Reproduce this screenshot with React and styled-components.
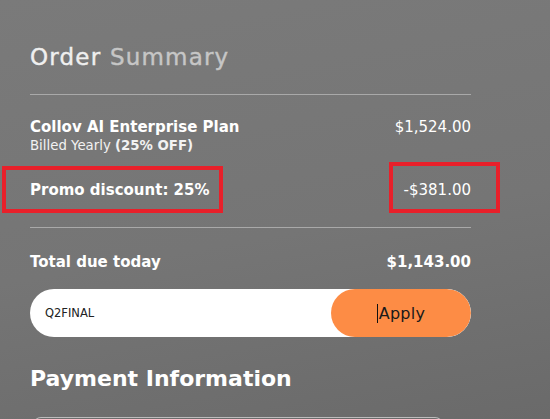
import styled, { createGlobalStyle } from 'styled-components';

const GlobalStyle = createGlobalStyle`
  html, body {
    margin: 0;
    padding: 0;
  }
  body {
    font-family: "DejaVu Sans", "Liberation Sans", sans-serif;
    color: #fff;
  }
`;

const Page = styled.div`
  height: 419px;
  box-sizing: border-box;
  padding: 42px 79px 0 30px;
  background: linear-gradient(170deg, #7a7a7a 0%, #757575 55%, #6a6a6a 100%);
  overflow: hidden;
`;

const Title = styled.h2`
  margin: 0;
  font-size: 23px;
  font-weight: 400;
  line-height: 30px;
  color: #efefef;
  letter-spacing: 1.2px;
  -webkit-text-stroke: 0.4px currentColor;
`;

const Muted = styled.span`
  color: #c6c6c6;
`;

const Divider = styled.hr`
  margin: ${p => p.top}px 0 0;
  border: none;
  height: 1px;
  background: #a9a9a9;
`;

const Row = styled.div`
  position: relative;
  display: flex;
  justify-content: space-between;
  align-items: flex-start;
  margin-top: ${p => p.top}px;
`;

const Label = styled.div`
  font-size: 15px;
  font-weight: 700;
  line-height: 20px;
`;

const Sub = styled.div`
  font-size: 13.3px;
  line-height: 18px;
  color: #f2f2f2;

  b {
    font-weight: 700;
  }
`;

const Amount = styled.div`
  font-size: 15px;
  font-weight: ${p => (p.bold ? 700 : 400)};
  line-height: 20px;
`;

const Marker = styled.div`
  position: absolute;
  border: 4px solid #e8202a;
  box-sizing: border-box;
`;

const PromoForm = styled.div`
  display: flex;
  align-items: center;
  height: 48px;
  margin-top: 17px;
  background: #fff;
  border-radius: 24px;
  overflow: hidden;
`;

const PromoInput = styled.div`
  flex: 1;
  padding-left: 15px;
  font-size: 11.5px;
  color: #222;
`;

const ApplyButton = styled.div`
  width: 140px;
  height: 48px;
  display: flex;
  align-items: center;
  justify-content: center;
  background: #fd8c45;
  border-radius: 24px;
  font-size: 16px;
  font-weight: 400;
  color: #1a1a1a;
  letter-spacing: 0.3px;
`;

const Caret = styled.span`
  display: inline-block;
  width: 1px;
  height: 19px;
  background: #111;
  margin-right: 1px;
`;

const Heading = styled.h2`
  margin: 27px 0 0;
  font-size: 22px;
  font-weight: 700;
  line-height: 30px;
  color: #fff;
`;

const NextField = styled.div`
  height: 20px;
  margin: 23px 28px 0 3px;
  border: 1px solid #bdbdbd;
  border-bottom: none;
  border-radius: 8px 8px 0 0;
`;

export default function App() {
  return (
    <>
      <GlobalStyle />
      <Page>
        <Title>
          Order <Muted>Summary</Muted>
        </Title>
        <Divider top={22} />

        <Row top={22}>
          <div>
            <Label>Collov AI Enterprise Plan</Label>
            <Sub>
              Billed Yearly <b>(25% OFF)</b>
            </Sub>
          </div>
          <Amount>$1,524.00</Amount>
        </Row>

        <Row top={25}>
          <Label>Promo discount: 25%</Label>
          <Amount>-$381.00</Amount>
          <Marker style={{ left: -28, top: -14, width: 221, height: 47 }} />
          <Marker style={{ left: 359, top: -18, width: 111, height: 51 }} />
        </Row>

        <Divider top={27} />

        <Row top={24}>
          <Label>Total due today</Label>
          <Amount bold>$1,143.00</Amount>
        </Row>

        <PromoForm>
          <PromoInput>Q2FINAL</PromoInput>
          <ApplyButton>
            <Caret />
            Apply
          </ApplyButton>
        </PromoForm>

        <Heading>Payment Information</Heading>
        <NextField />
      </Page>
    </>
  );
}
